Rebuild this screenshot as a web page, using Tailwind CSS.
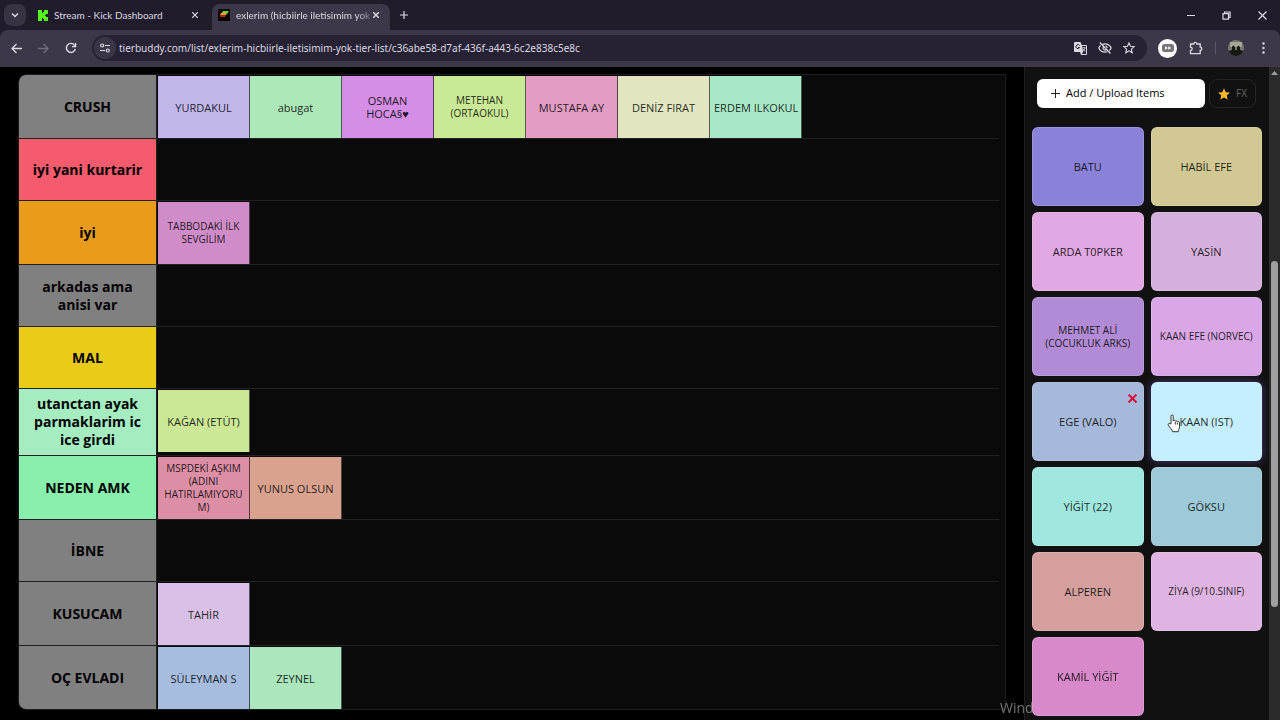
<!DOCTYPE html>
<html lang="tr">
<head>
    <meta charset="UTF-8">
    <meta name="viewport" content="width=device-width, initial-scale=1.0">
    <title>exlerim (hicbiirle iletisimim yok) Tier List</title>
    <script src="https://cdn.jsdelivr.net/npm/@tailwindcss/browser@4"></script>
</head>
<body class="h-screen flex flex-col overflow-hidden bg-black font-['Open_Sans','Noto_Sans',sans-serif] text-[11px] text-black">

  <!-- Browser tabs -->
  <header class="shrink-0 bg-[#201c2c] text-[#dcd8e4] font-['Lato','Open_Sans',sans-serif]">
    <div class="flex items-center h-[30px] pl-1">
      <button aria-label="Search tabs" class="w-[22px] h-[22px] rounded-lg bg-[#383343] flex items-center justify-center">
        <svg class="w-2 h-2" viewBox="0 0 8 8" fill="none" stroke="currentColor" stroke-width="1.5"><path d="M1 2.5l3 3 3-3"/></svg>
      </button>
      <div class="flex items-center w-[186px] pl-3 pr-[14px]">
        <svg class="w-[10px] h-[11px] shrink-0" viewBox="0 0 10 11" fill="#53fc18"><path d="M0 0h4v3h1V2h1V0h4v4H8v1H7v1h1v1h2v4H6V9H5V8H4v3H0z"/></svg>
        <span class="ml-[6px] flex-1 whitespace-nowrap text-[10px]">Stream - Kick Dashboard</span>
        <button aria-label="Close tab"><svg class="w-[6px] h-[6px]" viewBox="0 0 6 6" stroke="currentColor" stroke-width="1.2"><path d="M0 0l6 6M6 0L0 6"/></svg></button>
      </div>
      <div class="self-end flex items-center h-[26px] w-[178px] pl-[6px] pr-[11px] pb-1 rounded-t-lg bg-[#3d374a]">
        <svg class="w-3 h-3 shrink-0" viewBox="0 0 12 12"><path fill="#0a0505" d="M0 0h12v12H0z"/><path fill="#5fd83a" d="M5 2h6L9 5H3z"/><path fill="#e8a020" d="M3 4h6L8 6H2z"/><path fill="#b3231c" d="M2 6h6L7 8H2z"/></svg>
        <span class="ml-[6px] whitespace-nowrap text-[10px] mask-r-from-90% mask-r-to-105%">exlerim (hicbiirle iletisimim yok</span>
        <button aria-label="Close tab" class="ml-auto"><svg class="w-[6px] h-[6px]" viewBox="0 0 6 6" stroke="currentColor" stroke-width="1.4"><path d="M0 0l6 6M6 0L0 6"/></svg></button>
      </div>
      <button aria-label="New tab" class="ml-[10px]"><svg class="w-2 h-2" viewBox="0 0 8 8" stroke="currentColor" stroke-width="1.2"><path d="M4 0v8M0 4h8"/></svg></button>
      <div class="ml-auto flex items-center gap-[27px] pr-[13px]">
        <button aria-label="Minimize"><svg class="w-2 h-2" viewBox="0 0 8 8" stroke="currentColor" stroke-width="1"><path d="M0 4.500h8"/></svg></button>
        <button aria-label="Restore"><svg class="w-[9px] h-[9px]" viewBox="0 0 9 9" fill="none" stroke="currentColor" stroke-width="1.2"><path d="M1 2.600h5.500v5.500H1zM2.600 2.600V1h5.500v5.500H6.500"/></svg></button>
        <button aria-label="Close"><svg class="w-[9px] h-[9px]" viewBox="0 0 9 9" stroke="currentColor" stroke-width="1.2"><path d="M.5.5l8 8M8.500.5l-8 8"/></svg></button>
      </div>
    </div>

    <!-- Toolbar -->
    <div class="flex items-center h-[37px] pl-[11px] pr-[15px] pb-px rounded-t-lg bg-[#3d374a]">
      <button aria-label="Back"><svg class="w-[11px] h-[11px]" viewBox="0 0 11 11" fill="none" stroke="currentColor" stroke-width="1.3"><path d="M11 5.500H1M5.500 1L1 5.500 5.500 10"/></svg></button>
      <button aria-label="Forward" class="ml-4 text-[#716b7e]"><svg class="w-[11px] h-[11px]" viewBox="0 0 11 11" fill="none" stroke="currentColor" stroke-width="1.3"><path d="M0 5.500h10M5.500 1L10 5.500 5.500 10"/></svg></button>
      <button aria-label="Reload" class="ml-4"><svg class="w-3 h-3" viewBox="0 0 12 12" fill="none" stroke="currentColor" stroke-width="1.4"><path d="M10.300 7A4.500 4.500 0 1 1 9.600 3.300L10.500 4.500"/><path d="M10.600 1v3.600H7"/></svg></button>
      <div class="ml-[15px] flex flex-1 items-center h-[26px] pl-[2px] pr-3 rounded-full bg-[#272233]">
        <button aria-label="Site information" class="w-[22px] h-[22px] rounded-full bg-[#3b3548] flex items-center justify-center">
          <svg class="w-[10px] h-[10px]" viewBox="0 0 10 10" fill="none" stroke="currentColor" stroke-width="1.2"><circle cx="2.200" cy="2.500" r="1.500"/><path d="M5 2.500h5M0 7.500h5"/><circle cx="7.800" cy="7.500" r="1.500"/></svg>
        </button>
        <input aria-label="Address" value="tierbuddy.com/list/exlerim-hicbiirle-iletisimim-yok-tier-list/c36abe58-d7af-436f-a443-6c2e838c5e8c" class="ml-[3px] flex-1 min-w-0 bg-transparent outline-none font-['Noto_Sans',sans-serif] text-[10px]">
        <div class="flex items-center gap-[11px]">
          <button aria-label="Translate"><svg class="w-[13px] h-[13px]" viewBox="0 0 13 13"><path fill="currentColor" d="M1 0h5.500l1.200 3H12a1 1 0 0 1 1 1v8a1 1 0 0 1-1 1H7L6 10H1a1 1 0 0 1-1-1V1a1 1 0 0 1 1-1z"/><path fill="#272233" d="M8 4h4v8H7.700l1.500-2z"/><path fill="none" stroke="#272233" d="M5.500 3.500A2 2 0 1 0 5.700 5.500H4"/><path fill="none" stroke="currentColor" stroke-width=".8" d="M8.300 5.800h3.400M10 5v.8M11 6c-.2 1.500-1 2.500-2 3.200M9 7c.5 1.200 1.400 2 2.400 2.400"/></svg></button>
          <button aria-label="Third-party cookies blocked"><svg class="w-[14px] h-3" viewBox="0 0 14 12" fill="none" stroke="currentColor" stroke-width="1.200"><path d="M4.300 2.500C5 2.100 6 1.800 7 1.800c2.700 0 5 1.600 6.200 4.200-.5 1-1.200 1.900-2 2.500M9.300 9.800c-.7.300-1.500.4-2.300.4C4.300 10.200 2 8.600.8 6c.4-1 1-1.800 1.800-2.500M5.300 4.700a2.200 2.200 0 0 0 3 3M7.500 3.800A2.200 2.200 0 0 1 9.200 6M1.800.5l10.700 11"/></svg></button>
          <button aria-label="Bookmark"><svg class="w-3 h-3" viewBox="0 0 12 12" fill="none" stroke="currentColor" stroke-width="1.100"><path d="M6 .9l1.500 3.400 3.700.3-2.800 2.500.8 3.700L6 8.900l-3.200 1.900.8-3.700L.8 4.600l3.700-.3z"/></svg></button>
        </div>
      </div>
      <div class="flex items-center ml-[11px]">
        <button aria-label="Extension" class="w-[19px] h-[19px] rounded-full bg-white flex items-center justify-center">
          <svg class="w-3 h-2" viewBox="0 0 12 8"><rect width="12" height="8" rx="2.500" fill="#77747a"/><path fill="#fff" d="M3 2.300L5.800 4 3 5.700zM6.300 2.300L9.100 4 6.300 5.700z"/></svg>
        </button>
        <button aria-label="Extensions" class="ml-3"><svg class="w-[14px] h-[14px]" viewBox="0 0 14 14" fill="none" stroke="currentColor" stroke-width="1.300"><path d="M1.500 3h3.200a1.600 1.600 0 0 1 3.200 0h3.300v3.200a1.600 1.600 0 0 1 0 3.200v3.200H1.500V9.500a1.700 1.700 0 0 0 0-3.400z"/></svg></button>
        <span class="ml-3 w-px h-3 bg-[#5a5468]"></span>
        <button aria-label="Profile" class="ml-3"><svg class="w-4 h-4 rounded-full" viewBox="0 0 16 16"><path fill="#77776d" d="M0 0h16v16H0z"/><path fill="#a6a698" d="M2 2h12v5H2z"/><path fill="#171a12" d="M0 11l4-1V6.500l1.500-1L7 7v3h2V7l1.500-1.500L12 7v3l4 1v5H0z"/></svg></button>
        <button aria-label="Menu" class="ml-[18px]"><svg class="w-[3px] h-3" viewBox="0 0 3 12" fill="currentColor"><circle cx="1.500" cy="1.500" r="1.200"/><circle cx="1.500" cy="6" r="1.200"/><circle cx="1.500" cy="10.500" r="1.200"/></svg></button>
      </div>
    </div>
  </header>

  <!-- Desktop watermark, the item cards lie over it -->
  <div class="fixed left-[1000px] top-[698px] text-[14px] leading-5 text-[#737373]">Windows</div>

  <div class="flex flex-1 min-h-0">
    <!-- Tier board -->
    <main class="flex-1 min-w-0 pl-[18px] pr-[18px] pt-[7px]">
      <div id="board" class="border border-[#1c1c1c] rounded-l-lg overflow-hidden bg-[#0a0a0a] pr-[6px]"></div>
    </main>

    <!-- Unplaced items -->
    <aside class="w-[245px] shrink-0 border-l border-[#1e1e1e] bg-[#111111] pl-[7px] pr-[7px] overflow-hidden">
      <div class="flex gap-1 pl-[5px] pr-[6px] pt-3">
        <button class="flex items-center w-[168px] h-[29px] pl-[14px] rounded-md bg-white text-[11px] font-medium">
          <svg class="w-[9px] h-[9px] mr-[6px]" viewBox="0 0 9 9" stroke="#222" stroke-width="1"><path d="M4.500 0v9M0 4.500h9"/></svg>
          Add / Upload Items
        </button>
        <button class="flex items-center justify-center flex-1 h-[29px] rounded-lg border border-[#252525] text-[10px] text-[#666]">
          <svg class="w-3 h-3 mr-[6px]" viewBox="0 0 12 12" fill="#fbb92c"><path d="M6 .3l1.700 3.900 4.200.4-3.200 2.800 1 4.200L6 9.400l-3.700 2.200 1-4.200L.1 4.600l4.200-.4z"/></svg>
          FX
        </button>
      </div>
      <div id="pool" class="grid grid-cols-2 gap-x-[7px] gap-y-[6px] mt-[19px]"></div>
    </aside>

    <!-- Scrollbar -->
    <div class="w-[11px] shrink-0 bg-[#2b2b2b] flex flex-col items-center pt-1">
      <svg class="w-[7px] h-1" viewBox="0 0 7 4" fill="#9f9f9f"><path d="M3.500 0L7 4H0z"/></svg>
      <div class="mt-[186px] w-[7px] h-[346px] rounded-full bg-[#9f9f9f]"></div>
    </div>
  </div>

  <!-- Mouse pointer -->
  <svg class="fixed left-[1167px] top-[414px] w-[14px] h-[19px]" viewBox="0 0 14 19" fill="#fff" stroke="#222" stroke-width=".9" stroke-linejoin="round"><path d="M4 10V2.200c0-1.800 2.200-1.800 2.200 0V7c.3-1 1.900-.9 2.100.2.500-.8 1.800-.6 2 .5.800-.7 2.200-.2 2.200 1.200v4c0 2-1 2.600-1.300 4.800H5.600C5 15.500 2.500 13.500 1.300 11.200c-.8-1.500 1-2.300 1.800-1.400z"/><path d="M8.300 8v2.500M10.300 8.500v2" fill="none"/></svg>

  <script>
    // the third value marks long names, which get the smaller text
    const tiers = [
      { name: 'CRUSH', color: '#808080', items: [['YURDAKUL', '#c1b7eb'], ['abugat', '#ade8b9'], ['OSMAN HOCA§♥', '#d48ee5'], ['METEHAN (ORTAOKUL)', '#c9e996', 1], ['MUSTAFA AY', '#e39cc3'], ['DENİZ FIRAT', '#e1e5c0'], ['<span class="whitespace-nowrap">ERDEM ILKOKUL</span>', '#a9e8c7']] },
      { name: 'iyi yani kurtarir', color: '#f45b6c', items: [] },
      { name: 'iyi', color: '#e89c1a', items: [['TABBODAKİ İLK SEVGİLİM', '#cf8cc8', 1]] },
      { name: 'arkadas ama anisi var', color: '#808080', items: [] },
      { name: 'MAL', color: '#eacb17', items: [] },
      { name: 'utanctan ayak parmaklarim ic ice girdi', color: '#a5edc0', items: [['KAĞAN (ETÜT)', '#cbe897']] },
      { name: 'NEDEN AMK', color: '#89efac', items: [['MSPDEKİ AŞKIM (ADINI HATIRLAMIYORUM)', '#dc8ea5', 1], ['YUNUS OLSUN', '#d9a28f']] },
      { name: 'İBNE', color: '#808080', items: [] },
      { name: 'KUSUCAM', color: '#808080', items: [['TAHİR', '#d9c0e7']] },
      { name: 'OÇ EVLADI', color: '#808080', items: [['SÜLEYMAN S', '#a6bde0'], ['ZEYNEL', '#abe6bc']] },
    ];

    const pool = [
      ['BATU', '#8a82d9'], ['HABİL EFE', '#d1c893'],
      ['ARDA T0PKER', '#e2a8e3'], ['YASİN', '#d5b0dc'],
      ['MEHMET ALİ (COCUKLUK ARKS)', '#b18bd5', 1], ['KAAN EFE (NORVEC)', '#d9a7e7', 1],
      ['EGE (VALO)', '#a6b9da'], ['KAAN (IST)', '#c5eeff'],
      ['YİĞİT (22)', '#9fe7df'], ['GÖKSU', '#9dc9d8'],
      ['ALPEREN', '#d59f9e'], ['ZİYA (9/10.SINIF)', '#dfb3e2', 1],
      ['KAMİL YİĞİT', '#d889ca'],
    ];

    document.getElementById('board').innerHTML = tiers.map(tier => `
      <section class="flex min-h-[62px] border-b border-[#222] last:border-b-0">
        <h2 class="w-[138px] shrink-0 flex items-center justify-center px-3 py-[6px] border-r border-[#222] text-center text-[14px] leading-[18px] font-bold" style="background:${tier.color}">${tier.name}</h2>
        <div class="flex items-start pt-px pl-px">
          ${tier.items.map(([name, color, small]) => `
            <div class="w-[92px] h-[62px] flex items-center justify-center px-1 border-r border-black/60 text-center ${small ? 'text-[10px]' : 'text-[11px]'} leading-[13px]" style="background:${color}"><span class="min-w-0 wrap-break-word text-black/85">${name}</span></div>
          `).join('')}
        </div>
      </section>
    `).join('');

    document.getElementById('pool').innerHTML = pool.map(([name, color, small]) => `
      <div class="relative h-[79px] flex items-center justify-center px-2 rounded-md border border-white/15 text-center ${name === 'KAAN (IST)' ? 'shadow-[0_0_8px_#4a3a78]' : ''} ${small ? 'text-[10px]' : 'text-[11px]'} leading-[13px]" style="background:${color}">
        <span class="text-black/85">${name}</span>
        ${name === 'EGE (VALO)' ? `<button aria-label="Remove" class="absolute right-[6px] top-[11px]"><svg class="w-[9px] h-[9px]" viewBox="0 0 8 8" stroke="#d8103c" stroke-width="1.800"><path d="M.5.5l7 7M7.500.5l-7 7"/></svg></button>` : ''}
      </div>
    `).join('');
  </script>
</body>
</html>
